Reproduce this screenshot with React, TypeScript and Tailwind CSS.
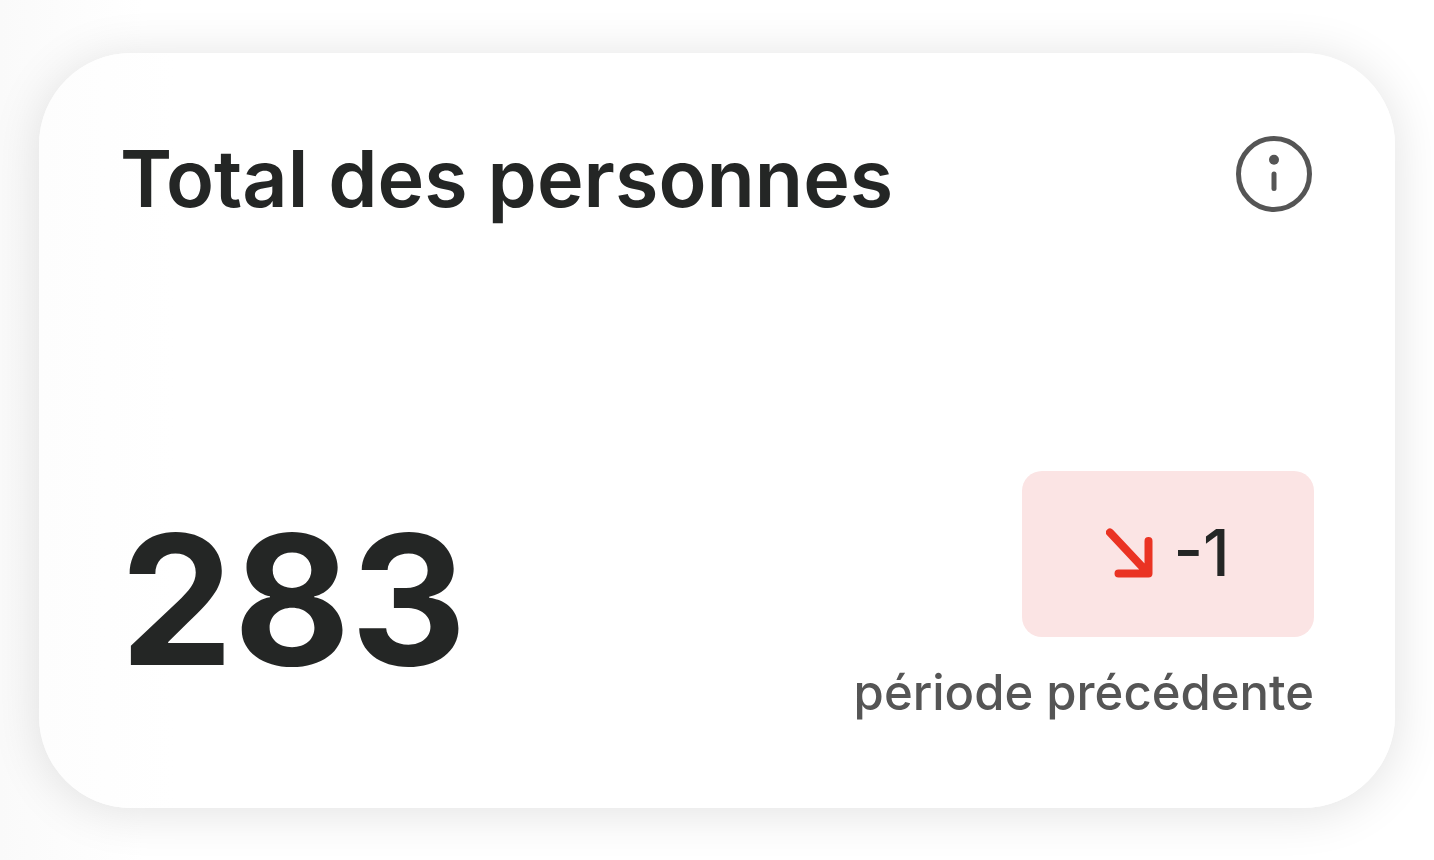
const stat = {
  title: "Total des personnes",
  value: 283,
  change: -1,
  caption: "période précédente",
};

function InfoIcon() {
  return (
    <svg viewBox="0 0 76 76" className="size-[76px]" aria-hidden="true">
      <circle cx="38" cy="38" r="35.5" fill="none" stroke="#555555" strokeWidth="5" />
      <circle cx="38" cy="23.7" r="5" fill="#555555" />
      <path d="M38 38v14.5" stroke="#555555" strokeWidth="5" strokeLinecap="round" />
    </svg>
  );
}

function ArrowDownRight() {
  return (
    <svg viewBox="0 0 47 50" className="h-[50px] w-[47px]" aria-hidden="true">
      <path
        d="M4 4.5L42 45M42.5 13v32.5H12.5"
        fill="none"
        stroke="#ea3323"
        strokeWidth="8"
        strokeLinecap="round"
        strokeLinejoin="round"
      />
    </svg>
  );
}

export default function App() {
  return (
    <main className="min-h-screen bg-linear-to-r from-[#fafafa] to-white to-10% px-[39px] py-[53px] font-['Inter','Liberation_Sans',sans-serif] text-[#242625]">
      {/* Stat card */}
      <section className="flex flex-col justify-between gap-[251px] rounded-[92px] bg-linear-to-r from-[#fdfdfd] to-white to-10% px-[81px] pt-[83px] pb-[87px] shadow-[0_4px_50px_rgba(0,0,0,0.12)]">
        <header className="flex items-start justify-between pr-0.5">
          <h1 className="pt-0.5 pb-0.5 text-[79px] leading-[80px] font-semibold">{stat.title}</h1>
          <button type="button" aria-label="Information" className="shrink-0">
            <InfoIcon />
          </button>
        </header>

        <div className="flex items-center justify-between">
          <p className="pt-2 text-[180px] leading-[180px] font-bold">{stat.value}</p>

          <div className="flex flex-col items-end gap-7">
            <p className="flex h-[166px] w-[292px] items-center justify-center gap-5 rounded-[20px] bg-[#fbe4e4] pb-0.5 text-[64px] leading-[64px] font-medium">
              <ArrowDownRight />
              {stat.change}
            </p>
            <p className="text-[49px] leading-[56px] font-medium text-[#555555]">{stat.caption}</p>
          </div>
        </div>
      </section>
    </main>
  );
}
